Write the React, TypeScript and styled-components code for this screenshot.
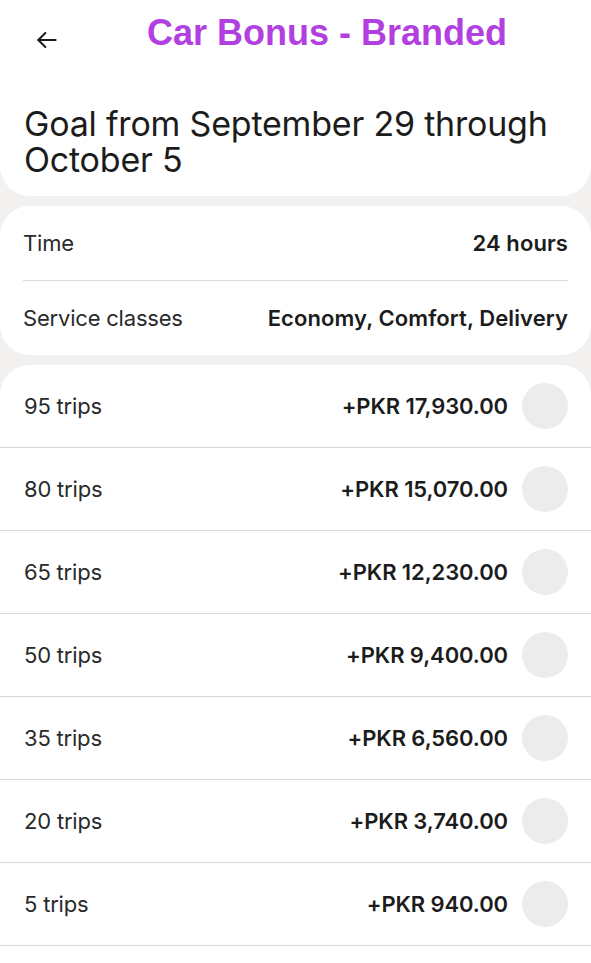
import styled, { createGlobalStyle } from "styled-components"

const goals = [
    { trips: 95, amount: "+PKR 17,930.00" },
    { trips: 80, amount: "+PKR 15,070.00" },
    { trips: 65, amount: "+PKR 12,230.00" },
    { trips: 50, amount: "+PKR 9,400.00" },
    { trips: 35, amount: "+PKR 6,560.00" },
    { trips: 20, amount: "+PKR 3,740.00" },
    { trips: 5, amount: "+PKR 940.00" },
]

export default function App() {
    return (
        <>
            <GlobalStyle />
            <Page>
                <HeaderCard>
                    <TopBar>
                        <BackButton aria-label="Back">
                            <svg width="26" height="26" viewBox="0 0 24 24" fill="none" stroke="#1a1a1a" strokeWidth="1.8" strokeLinecap="round" strokeLinejoin="round">
                                <path d="M20 12H4" />
                                <path d="M10.5 5.5L4 12l6.5 6.5" />
                            </svg>
                        </BackButton>
                        <Title>Car Bonus - Branded</Title>
                    </TopBar>
                    <Heading>Goal from September 29 through October 5</Heading>
                </HeaderCard>

                <InfoCard>
                    <InfoRow>
                        <Label>Time</Label>
                        <Value>24 hours</Value>
                    </InfoRow>
                    <InfoRow>
                        <Label>Service classes</Label>
                        <Value>Economy, Comfort, Delivery</Value>
                    </InfoRow>
                </InfoCard>

                <GoalsCard>
                    {goals.map((g) => (
                        <GoalRow key={g.trips}>
                            <Label>{g.trips} trips</Label>
                            <Amount>{g.amount}</Amount>
                            <Check />
                        </GoalRow>
                    ))}
                </GoalsCard>
            </Page>
        </>
    )
}

const GlobalStyle = createGlobalStyle`
    html, body {
        margin: 0;
        padding: 0;
        background: #f2f1f0;
    }
    body {
        font-family: Inter, "Noto Sans", sans-serif;
        color: #1c1c1c;
    }
`

const Page = styled.div`
    width: 591px;
    min-height: 963px;
    background: #f2f1f0;
    display: flex;
    flex-direction: column;
    gap: 10px;
`

const HeaderCard = styled.div`
    background: #fff;
    border-radius: 0 0 30px 30px;
    padding-bottom: 18px;
`

const TopBar = styled.div`
    height: 76px;
    display: flex;
    align-items: center;
    padding-left: 34px;
    gap: 87px;
`

const BackButton = styled.button`
    border: none;
    background: none;
    padding: 0;
    margin-top: 4px;
    width: 26px;
    height: 26px;
    display: flex;
    align-items: center;
    justify-content: center;
`

const Title = styled.h1`
    margin: 0;
    font-family: "Liberation Sans", Arial, sans-serif;
    font-weight: 700;
    font-size: 36px;
    color: #b23fe0;
    margin-top: -10px;
`

const Heading = styled.h2`
    margin: 30px 0 0;
    padding: 0 24px;
    font-size: 34px;
    font-weight: 400;
    line-height: 36px;
    letter-spacing: -0.2px;
    color: #1c1c1c;
`

const InfoCard = styled.div`
    background: #fff;
    border-radius: 30px;
    padding: 0 23px;
`

const InfoRow = styled.div`
    height: 74px;
    display: flex;
    align-items: center;
    justify-content: space-between;

    & + & {
        border-top: 1.5px solid #d9d9d9;
    }
`

const Label = styled.span`
    font-size: 22px;
    color: #2a2a2a;
    letter-spacing: -0.2px;
`

const Value = styled.span`
    font-size: 22px;
    font-weight: 600;
    color: #1c1c1c;
    letter-spacing: 0.1px;
`

const GoalsCard = styled.div`
    background: #fff;
    border-radius: 30px 30px 0 0;
    flex: 1;
`

const GoalRow = styled.div`
    height: 82px;
    display: flex;
    align-items: center;
    padding: 0 23px 0 24px;
    border-bottom: 1.5px solid #d6d6d6;

    & > :first-child {
        margin-right: auto;
    }
`

const Amount = styled.span`
    font-size: 22px;
    font-weight: 600;
    color: #1c1c1c;
    letter-spacing: -0.1px;
    margin-right: 14px;
`

const Check = styled.span`
    width: 46px;
    height: 46px;
    border-radius: 50%;
    background: #ececec;
`
